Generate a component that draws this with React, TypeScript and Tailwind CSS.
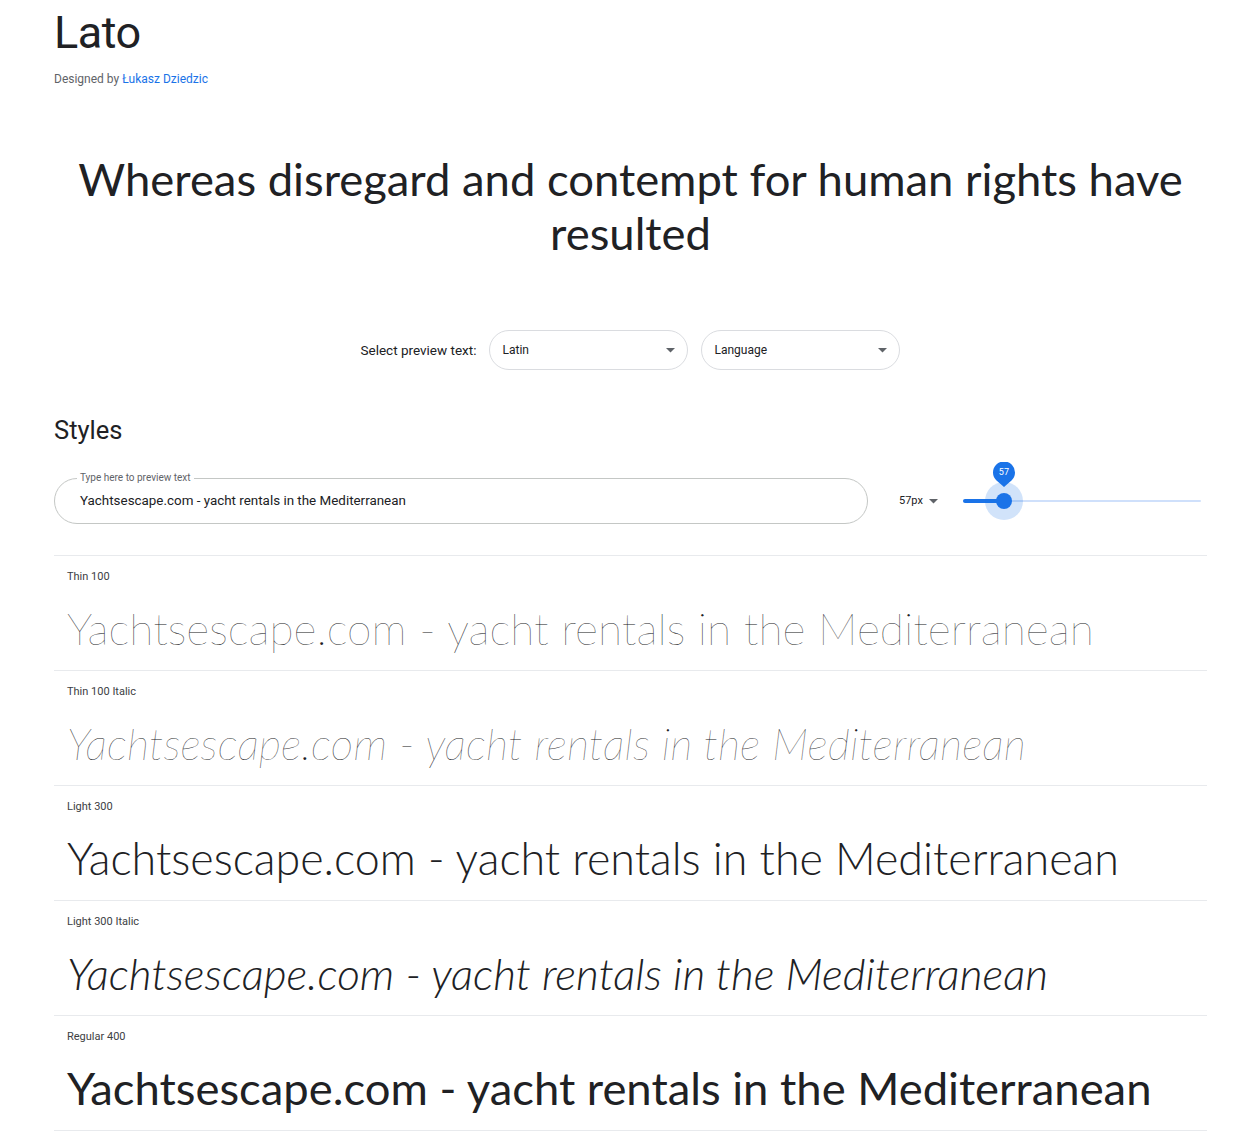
const sample = "Yachtsescape.com - yacht rentals in the Mediterranean";

const styles = [
  { label: "Thin 100", cls: "font-thin text-[44.4px]" },
  { label: "Thin 100 Italic", cls: "font-thin italic text-[43.9px]" },
  { label: "Light 300", cls: "font-light text-[44.8px]" },
  { label: "Light 300 Italic", cls: "font-light italic text-[44.2px]" },
  { label: "Regular 400", cls: "font-normal text-[45.4px]" },
];

function Caret() {
  return (
    <svg width="9" height="5" viewBox="0 0 9 5" className="shrink-0">
      <path d="M0 0 L9 0 L4.5 4.5 Z" fill="#5f6368" />
    </svg>
  );
}

function Select({ label }: { label: string }) {
  return (
    <div className="flex h-[40px] w-[199px] items-center justify-between rounded-full border border-[#dadce0] pl-[12px] pr-[12px] text-[12px] text-[#202124]">
      <span>{label}</span>
      <Caret />
    </div>
  );
}

export default function App() {
  return (
    <main className="min-h-screen bg-white pl-[54px] pr-[34px] text-[#202124] antialiased font-['Roboto','Liberation_Sans',sans-serif]">
      {/* Cabecera */}
      <h1 className="pt-[6px] text-[45px] leading-[54px] tracking-[-0.5px]">Lato</h1>
      <p className="mt-[12px] text-[12px] leading-[15px] text-[#5f6368]">
        Designed by <a className="text-[#1a73e8]">Łukasz Dziedzic</a>
      </p>

      {/* Texto de muestra grande */}
      <h2 className="mt-[65px] text-center font-['Lato',sans-serif] text-[45.4px] leading-[54px]">
        Whereas disregard and contempt for human rights have resulted
      </h2>

      {/* Selector */}
      <div className="mt-[70px] flex items-center justify-center gap-[13px] text-[13.5px]">
        <span>Select preview text:</span>
        <Select label="Latin" />
        <Select label="Language" />
      </div>

      {/* Styles */}
      <h3 className="mt-[44px] text-[25.5px] leading-[32px]">Styles</h3>

      <div className="mt-[32px] flex items-center">
        <div className="relative flex h-[46px] w-[814px] items-center rounded-full border border-[#c4c7c5] pl-[25px] text-[13.4px]">
          <span className="absolute -top-[7px] left-[22px] bg-white px-[3px] text-[10px] leading-[12px] text-[#5f6368]">
            Type here to preview text
          </span>
          Yachtsescape.com - yacht rentals in the Mediterranean
        </div>
        <div className="ml-[31px] flex items-center gap-[6px] text-[11px]">
          57px <Caret />
        </div>
        <div className="relative ml-[25px] h-[40px] flex-1">
          {/* pista */}
          <div className="absolute left-[0px] right-[6px] top-[19px] h-[2px] rounded-full bg-[#cfe0fb]" />
          <div className="absolute left-[0px] top-[18px] h-[4px] w-[41px] rounded-full bg-[#1a73e8]" />
          <div className="absolute left-[22px] top-[1px] h-[38px] w-[38px] rounded-full bg-[#1a73e8]/20" />
          <div className="absolute left-[33px] top-[12px] h-[16px] w-[16px] rounded-full bg-[#1a73e8]" />
          {/* globo */}
          <div className="absolute left-[29px] -top-[19px] h-[25px] w-[24px]">
            <svg width="24" height="25" viewBox="0 0 24 25" className="absolute inset-0">
              <path d="M12 25 L4.5 18.5 A11 11 0 1 1 19.5 18.5 Z" fill="#1a73e8" />
            </svg>
            <span className="absolute left-0 right-0 top-[5px] text-center text-[9px] leading-[11px] text-white">57</span>
          </div>
        </div>
      </div>

      {/* Filas de estilos */}
      <div className="mt-[31px] border-t border-[#e8eaed]">
        {styles.map((s) => (
          <div key={s.label} className="relative h-[115px] overflow-hidden border-b border-[#e8eaed] pl-[13px]">
            <p className="pt-[14px] text-[11px] leading-[14px] text-[#3c4043]">{s.label}</p>
            <p className={`mt-[14px] whitespace-nowrap font-['Lato',sans-serif] leading-[60px] ${s.cls}`}>
              {sample}
            </p>
            <div className="absolute right-[40px] top-[40px] h-[65px] w-[8px] bg-gradient-to-r from-transparent to-white" />
          </div>
        ))}
      </div>
    </main>
  );
}
